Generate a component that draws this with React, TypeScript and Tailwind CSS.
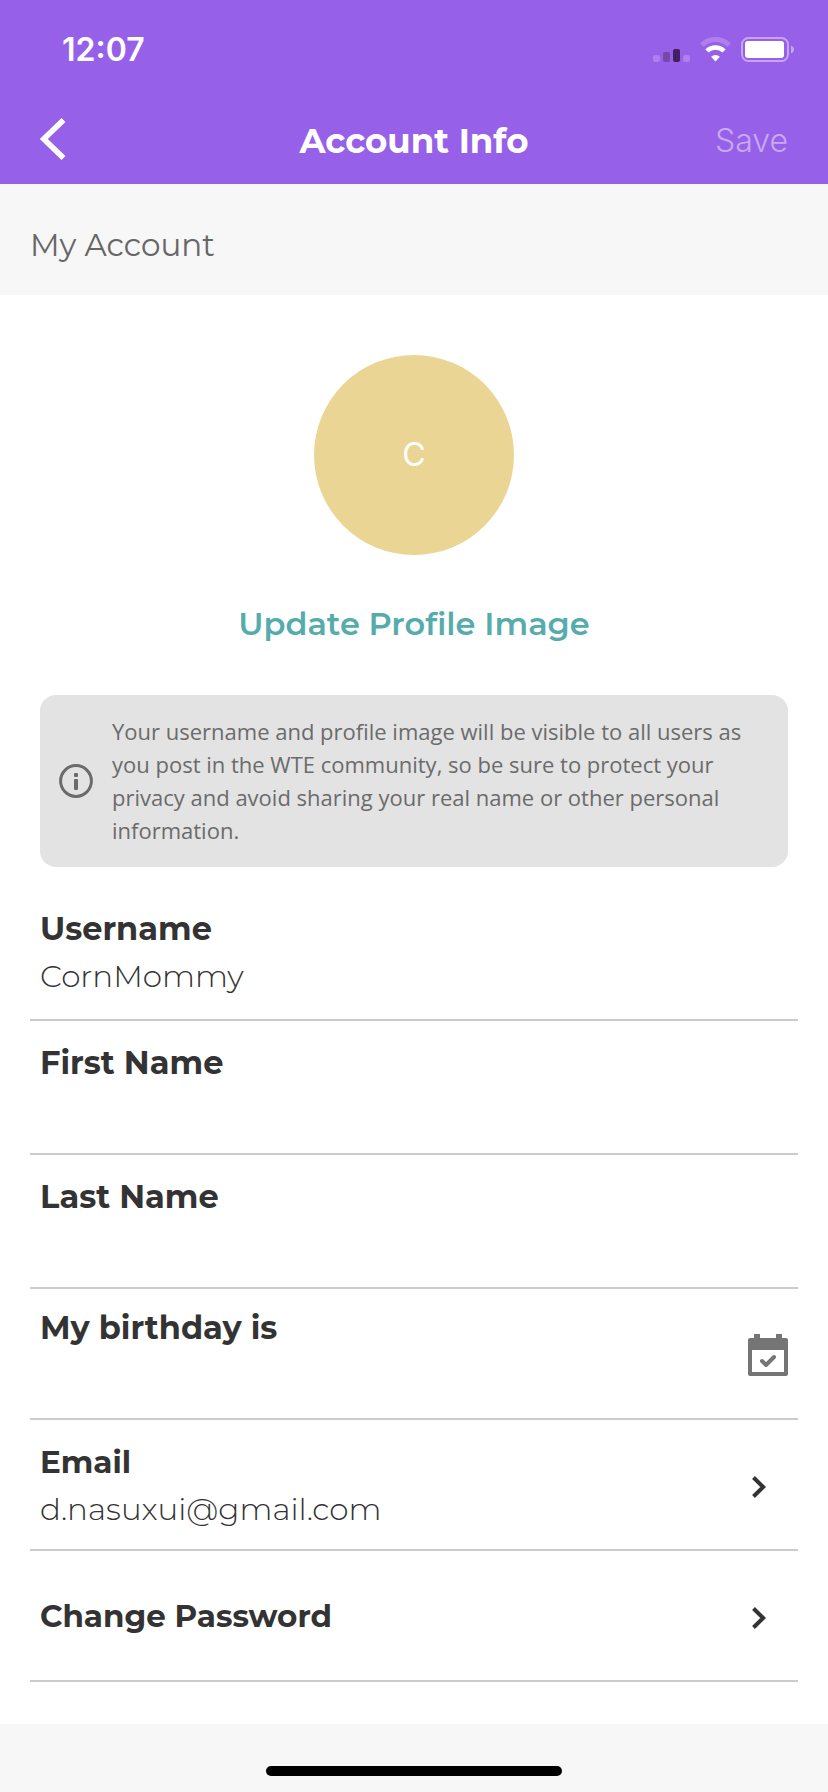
import { useState } from 'react'
import type { ReactNode } from 'react'

// ── Shared classes ──────────────────────────────────────────────────────────

const LABEL = 'block text-[32px] leading-12 font-bold text-[#333333]'
const LINK_LABEL = 'block text-[31px] leading-12 font-bold text-[#333333]'
const VALUE = 'block h-[46px] w-full bg-transparent text-[31px] leading-[46px] font-light text-[#333333] outline-none'

// ── Icons ───────────────────────────────────────────────────────────────────

function SignalIcon() {
    return (
        <svg width="37" height="26" viewBox="0 0 37 26" aria-hidden="true">
            <rect x="0" y="18" width="7" height="7" rx="2" fill="#b07eee" />
            <rect x="10" y="15" width="7" height="10" rx="2" fill="#7449a8" />
            <rect x="20" y="12" width="7" height="13" rx="2" fill="#402060" />
            <rect x="30" y="18" width="7" height="7" rx="2" fill="#b07eee" />
        </svg>
    )
}

function WifiIcon() {
    return (
        <svg width="31" height="26" viewBox="0 0 31 26" aria-hidden="true">
            <path d="M1.8 8 A19.5 19.5 0 0 1 29.2 8" fill="none" stroke="#b07eee" strokeWidth="5" />
            <path d="M7 14 A12 12 0 0 1 24 14" fill="none" stroke="#fff" strokeWidth="4.6" />
            <path d="M15.5 24.6 L11.1 19.8 A6.4 6.4 0 0 1 19.9 19.8 Z" fill="#fff" />
        </svg>
    )
}

function BatteryIcon() {
    return (
        <svg width="53" height="26" viewBox="0 0 53 26" aria-hidden="true">
            <rect x="1" y="1" width="46" height="23" rx="6.5" fill="none" stroke="#c7a4f5" strokeWidth="2" />
            <rect x="4" y="4" width="39" height="17" rx="3" fill="#fff" />
            <path d="M50 8.5 C52 9.3 53 10.8 53 12.5 C53 14.2 52 15.7 50 16.5 Z" fill="#c7a4f5" />
        </svg>
    )
}

function BackIcon() {
    return (
        <svg width="26" height="42" viewBox="0 0 26 42" aria-hidden="true">
            <path d="M23.5 2 L3.8 21 L23.5 40" fill="none" stroke="#fff" strokeWidth="5.6" />
        </svg>
    )
}

function InfoIcon() {
    return (
        <svg width="36" height="36" viewBox="0 0 36 36" aria-hidden="true" className="shrink-0">
            <circle cx="18" cy="18" r="15.4" fill="none" stroke="#6b6b6b" strokeWidth="3" />
            <rect x="16" y="10" width="4" height="4" rx="1" fill="#6b6b6b" />
            <rect x="16" y="16" width="4" height="11" rx="1" fill="#6b6b6b" />
        </svg>
    )
}

function CalendarIcon() {
    return (
        <svg width="40" height="42" viewBox="0 0 40 42" aria-hidden="true">
            <path
                fillRule="evenodd"
                fill="#757575"
                d="M6 0 H12 V4 H28 V0 H34 V4 H38 Q40 4 40 6 V40 Q40 42 38 42 H2 Q0 42 0 40 V6 Q0 4 2 4 H6 Z M4 16 V38 H36 V16 Z"
            />
            <path d="M14 27 L18 31 L26 23" fill="none" stroke="#757575" strokeWidth="4" strokeLinecap="round" strokeLinejoin="round" />
        </svg>
    )
}

function ChevronIcon() {
    return (
        <svg width="14" height="24" viewBox="0 0 14 24" aria-hidden="true" className="mt-1 mr-[22px] shrink-0">
            <path d="M1.5 2.5 L11.2 12 L1.5 21.5" fill="none" stroke="#333333" strokeWidth="4" />
        </svg>
    )
}

// ── Rows ────────────────────────────────────────────────────────────────────

interface FieldProps {
    id: string
    label: string
    initial?: string
}

function Field({ id, label, initial = '' }: FieldProps) {
    const [value, setValue] = useState(initial)

    return (
        <div className="border-b-2 border-[#cbcbcb] px-2.5 pt-[18px] pb-5">
            <label htmlFor={id} className={LABEL}>{label}</label>
            <input id={id} type="text" value={value} onChange={(e) => setValue(e.target.value)} className={VALUE} />
        </div>
    )
}

function LinkRow({ children }: { children: ReactNode }) {
    return (
        <button
            type="button"
            className="flex min-h-[131px] w-full items-center justify-between border-b-2 border-[#cbcbcb] px-2.5 text-left"
        >
            <span className="min-w-0">{children}</span>
            <ChevronIcon />
        </button>
    )
}

// ── Screen ──────────────────────────────────────────────────────────────────

export default function App() {
    const [birthday, setBirthday] = useState('')

    return (
        <div className="flex min-h-screen flex-col bg-white font-['Montserrat','Inter',sans-serif]">
            <header className="bg-[#9660e8] text-white">
                <div className="flex h-[98px] items-center justify-between pt-0.5 pr-[34px] pl-[62px]">
                    <span className="font-['Inter',sans-serif] text-[32px] font-semibold">12:07</span>
                    <div className="flex items-center gap-2.5">
                        <SignalIcon />
                        <WifiIcon />
                        <BatteryIcon />
                    </div>
                </div>
                <div className="grid h-[86px] grid-cols-[1fr_auto_1fr] items-center px-10">
                    <button type="button" aria-label="Back" className="justify-self-start pb-1">
                        <BackIcon />
                    </button>
                    <h1 className="text-[34px] font-bold">Account Info</h1>
                    <button
                        type="button"
                        disabled
                        className="justify-self-end font-['Inter',sans-serif] text-[32px] font-light text-[#c9a8f6]"
                    >
                        Save
                    </button>
                </div>
            </header>

            <h2 className="flex h-[111px] items-center bg-[#f7f7f7] px-[30px] pt-3 text-[31px] font-normal text-[#666666]">
                My Account
            </h2>

            <main className="flex-1 px-[30px] pb-[42px]">
                <section className="flex flex-col items-center pt-[60px]">
                    <div className="flex size-[200px] items-center justify-center rounded-full bg-[#ebd595] font-['Inter',sans-serif] text-[32px] font-normal text-white">
                        C
                    </div>
                    <button type="button" className="mt-[45px] text-[32px] leading-12 font-semibold text-[#56acac]">
                        Update Profile Image
                    </button>
                </section>

                <div className="mx-2.5 mt-[47px] mb-5 flex items-center gap-[18px] rounded-2xl bg-[#e3e3e3] py-5 pr-[34px] pl-[18px]">
                    <InfoIcon />
                    <p className="font-['Open_Sans',sans-serif] text-[22px] leading-[33px] text-[#6b6b6b]">
                        Your username and profile image will be visible to all users as you post in the WTE community, so be
                        sure to protect your privacy and avoid sharing your real name or other personal information.
                    </p>
                </div>

                <Field id="username" label="Username" initial="CornMommy" />
                <Field id="first-name" label="First Name" />
                <Field id="last-name" label="Last Name" />

                <div className="flex items-center border-b-2 border-[#cbcbcb] px-2.5 pt-[15px] pb-5">
                    <div className="flex-1">
                        <label htmlFor="birthday" className={LABEL}>My birthday is</label>
                        <input
                            id="birthday"
                            type="text"
                            value={birthday}
                            onChange={(e) => setBirthday(e.target.value)}
                            className={VALUE}
                        />
                    </div>
                    <button type="button" aria-label="Pick a date" className="mt-2">
                        <CalendarIcon />
                    </button>
                </div>

                <LinkRow>
                    <span className={LINK_LABEL}>Email</span>
                    <span className={VALUE}>d.nasuxui@gmail.com</span>
                </LinkRow>
                <LinkRow>
                    <span className={LINK_LABEL}>Change Password</span>
                </LinkRow>
            </main>

            <footer className="flex h-[68px] items-end justify-center bg-[#f7f7f7] pb-4">
                <div className="h-2.5 w-[296px] rounded-full bg-black" />
            </footer>
        </div>
    )
}
